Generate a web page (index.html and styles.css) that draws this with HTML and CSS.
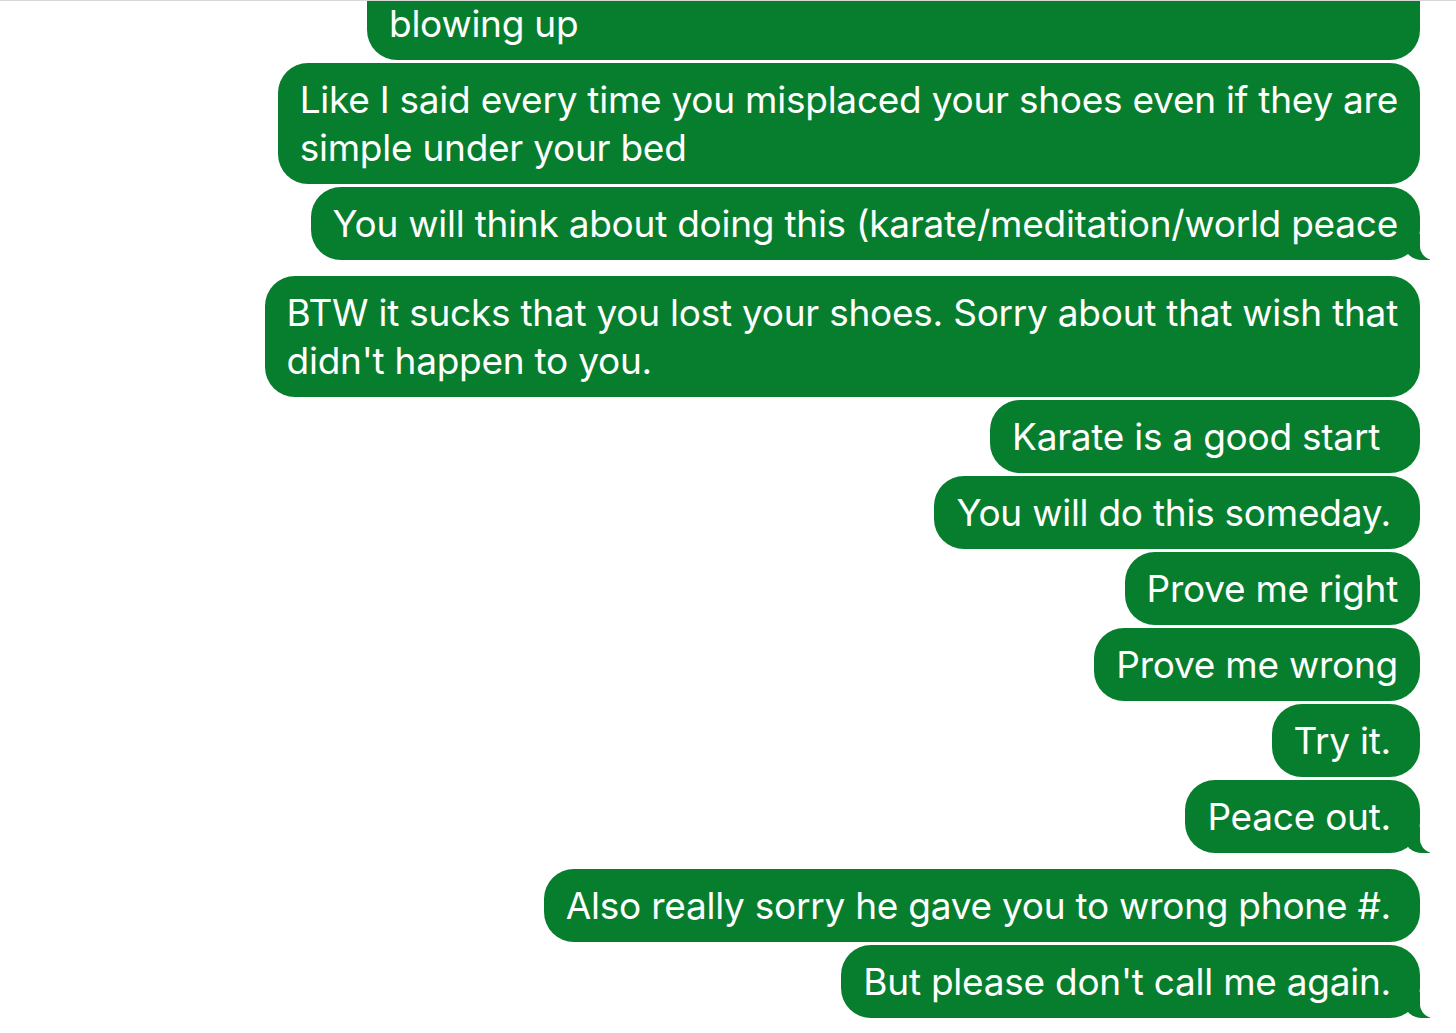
FILE: index.html
```html
<!DOCTYPE html>
<html lang="en">
<head>
  <meta charset="UTF-8">
  <meta name="viewport" content="width=device-width, initial-scale=1.0">
  <title>Messages</title>
  <link rel="stylesheet" href="styles.css">
</head>
<body>
  <main class="thread">
    <div class="bubble cut">blowing up</div>
    <div class="bubble">Like I said every time you misplaced your shoes even if they are<br>simple under your bed</div>
    <div class="bubble tail">You will think about doing this (karate/meditation/world peace</div>
    <div class="bubble">BTW it sucks that you lost your shoes. Sorry about that wish that<br>didn't happen to you.</div>
    <div class="bubble wide-end">Karate is a good start</div>
    <div class="bubble dot-end">You will do this someday.</div>
    <div class="bubble">Prove me right</div>
    <div class="bubble">Prove me wrong</div>
    <div class="bubble dot-end">Try it.</div>
    <div class="bubble dot-end tail">Peace out.</div>
    <div class="bubble dot-end">Also really sorry he gave you to wrong phone #.</div>
    <div class="bubble dot-end tail">But please don't call me again.</div>
  </main>
</body>
</html>
```

FILE: styles.css
```css
:root {
  --bubble-bg: #077e2e;
  --text-color: #fff;
  --page-bg: #fff;
}
* { box-sizing: border-box; margin: 0; padding: 0; }
html, body {
  background: var(--page-bg);
  font-family: Inter, "Noto Sans", sans-serif;
  overflow: hidden;
}
body { border-top: 1px solid #d6d6d6; height: 1033px; }
/* Thread */
.thread {
  display: flex; flex-direction: column; align-items: flex-end;
  gap: 3px;
  padding-right: 36px;
  margin-top: -14px;
}
.bubble {
  position: relative;
  background: var(--bubble-bg); color: var(--text-color);
  font-size: 37px; line-height: 48px;
  letter-spacing: -0.25px;
  padding: 13px 22px 12px 22px;
  border-radius: 30px;
  white-space: nowrap;
}
/* last line of a longer message, scrolled off the top */
.bubble.cut { width: 1053px; border-top-left-radius: 0; border-top-right-radius: 0; }
.bubble.dot-end { padding-right: 29px; }
.bubble.wide-end { padding-right: 40px; }
/* Tail */
.bubble.tail { margin-bottom: 13px; }
.bubble.tail::before {
  content: '';
  position: absolute; bottom: 0; right: -10px;
  width: 26px; height: 26px;
  background: var(--bubble-bg);
  border-bottom-left-radius: 18px 16px;
}
.bubble.tail::after {
  content: '';
  position: absolute; bottom: 0; right: -30px;
  width: 30px; height: 28px;
  background: var(--page-bg);
  border-bottom-left-radius: 14px;
}
```
